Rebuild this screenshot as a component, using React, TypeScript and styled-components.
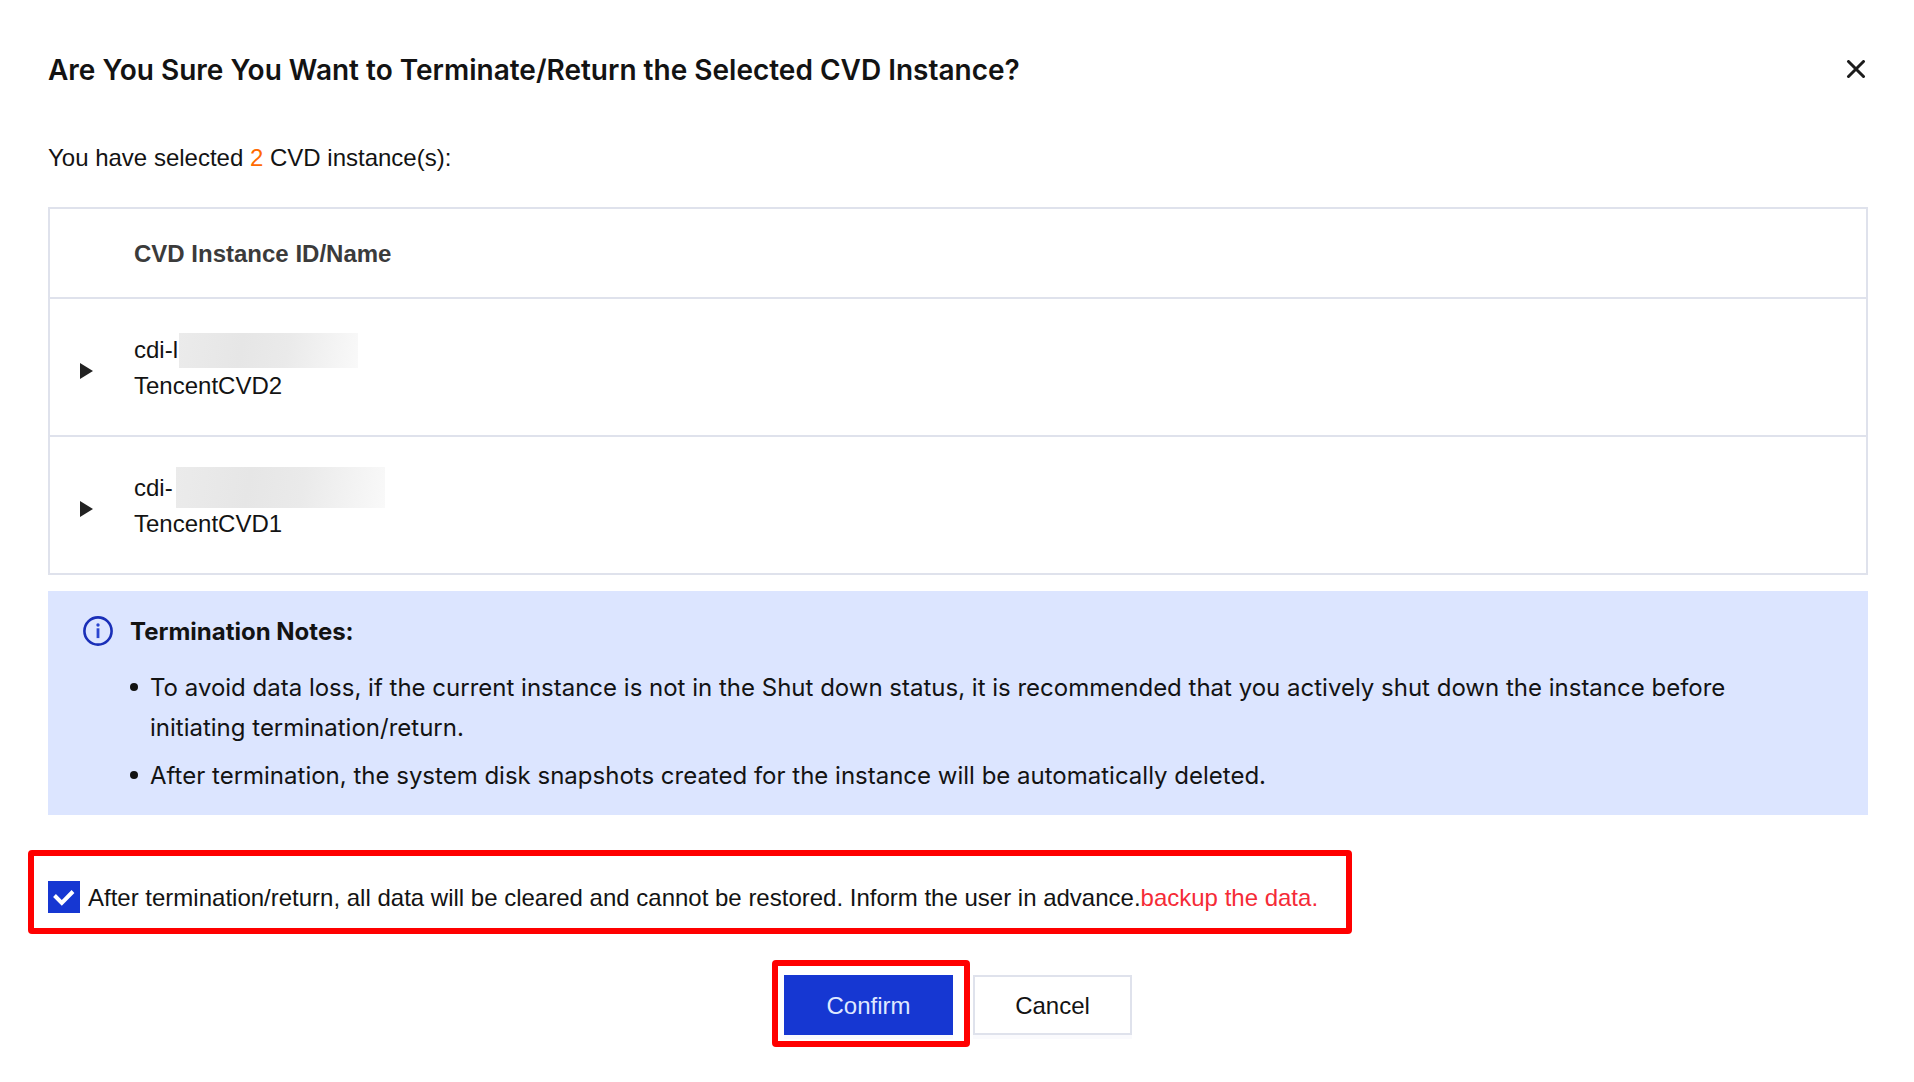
import React, { useState } from "react";
import styled, { createGlobalStyle } from "styled-components";

const sans = '"Liberation Sans", Arial, sans-serif';
const ui = 'Inter, "Liberation Sans", sans-serif';
const line = "#dfe2ec";
const blue = "#1637d2";

const GlobalStyle = createGlobalStyle`
  *, *::before, *::after { box-sizing: border-box; }
  body {
    margin: 0;
    background: #fff;
    color: #131313;
    font: 24px/36px ${sans};
  }
  button { font: inherit; color: inherit; cursor: pointer; }
`;

const Dialog = styled.main`
  padding: 52px 46px 46px 48px;
`;

const Header = styled.header`
  display: flex;
  align-items: center;
  justify-content: space-between;
  margin-bottom: 52px;
`;

const Title = styled.h1`
  margin: 0;
  font: 600 28px/36px ${ui};
`;

const CloseButton = styled.button`
  display: grid;
  place-items: center;
  width: 24px;
  height: 24px;
  padding: 0;
  border: 0;
  background: none;
`;

const Summary = styled.p`
  margin: 0 0 31px;
`;

const Count = styled.span`
  color: #ff6a00;
`;

const Table = styled.table`
  width: 100%;
  border-collapse: separate;
  border-spacing: 0;
  border: 2px solid ${line};
`;

const HeadCell = styled.th<{ $narrow?: boolean }>`
  width: ${(p) => (p.$narrow ? "84px" : "auto")};
  height: 88px;
  padding: 2px 0 0;
  color: #3b3b3b;
  text-align: left;
`;

const Cell = styled.td`
  height: 138px;
  padding: 2px 0 0;
  border-top: 2px solid ${line};
  vertical-align: middle;
`;

const ExpandButton = styled.button`
  display: grid;
  place-items: center;
  width: 24px;
  height: 24px;
  margin: 6px 0 0 24px;
  padding: 0;
  border: 0;
  background: none;
`;

const InstanceId = styled.div`
  position: relative;
`;

const Redaction = styled.span<{ $left: number; $top: number; $width: number; $height: number }>`
  position: absolute;
  left: ${(p) => p.$left}px;
  top: ${(p) => p.$top}px;
  width: ${(p) => p.$width}px;
  height: ${(p) => p.$height}px;
  background: linear-gradient(100deg, #ebebeb 0%, #e6e6e6 35%, #eaeaea 60%, #f9f9f9 100%);
`;

const Notes = styled.section`
  display: flex;
  align-items: flex-start;
  gap: 17px;
  margin-top: 16px;
  padding: 21px 128px 19px 35px;
  background: #dce5ff;
  font: 24px/40px ${ui};
`;

const InfoIcon = styled.svg`
  flex: none;
  margin-top: 4px;
`;

const NotesTitle = styled.h2`
  margin: 0 0 16px;
  font: 700 24px/40px ${ui};
`;

const NotesList = styled.ul`
  display: grid;
  gap: 8px;
  margin: 0;
  padding: 0;
  list-style: none;
`;

const Note = styled.li`
  display: grid;
  grid-template-columns: 8px 1fr;
  column-gap: 12px;

  &::before {
    content: "";
    width: 8px;
    height: 8px;
    margin-top: 15px;
    border-radius: 50%;
    background: currentColor;
  }
`;

const Highlight = styled.div<{ $inset: string }>`
  position: relative;
  width: fit-content;

  &::after {
    content: "";
    position: absolute;
    inset: ${(p) => p.$inset};
    border: 6px solid #f00;
    border-radius: 4px;
    pointer-events: none;
  }
`;

const Agreement = styled.div`
  margin-top: 66px;
`;

const AgreementLabel = styled.label`
  display: flex;
  align-items: flex-start;
  gap: 8px;
  line-height: 34px;
`;

const CheckboxBox = styled.span`
  display: grid;
  flex: none;
  width: 32px;
  height: 32px;

  & > * { grid-area: 1 / 1; }
`;

const Checkbox = styled.input`
  appearance: none;
  width: 32px;
  height: 32px;
  margin: 0;
  border: 2px solid ${line};
  background: #fff;

  &:checked {
    border-color: ${blue};
    background: ${blue};
  }
`;

const CheckMark = styled.svg`
  pointer-events: none;
`;

const Warning = styled.span`
  color: #f52b37;
`;

const Actions = styled.footer`
  display: flex;
  justify-content: center;
  gap: 20px;
  margin-top: 60px;
`;

const Button = styled.button<{ $primary?: boolean }>`
  min-width: ${(p) => (p.$primary ? "169px" : "159px")};
  height: 60px;
  padding: 2px 40px 0;
  border: 2px solid ${(p) => (p.$primary ? blue : line)};
  background: ${(p) => (p.$primary ? blue : "#fff")};
  color: ${(p) => (p.$primary ? "#dfe8ff" : "#131313")};
  box-shadow: 0 4px 0 #fafafd;
`;

const instances = [
  { id: "cdi-l", name: "TencentCVD2", mask: { $left: 45, $top: 1, $width: 179, $height: 35 } },
  { id: "cdi-", name: "TencentCVD1", mask: { $left: 42, $top: -3, $width: 209, $height: 41 } },
];

const notes = [
  "To avoid data loss, if the current instance is not in the Shut down status, it is recommended that you actively shut down the instance before initiating termination/return.",
  "After termination, the system disk snapshots created for the instance will be automatically deleted.",
];

export default function App() {
  const [agreed, setAgreed] = useState(true);

  return (
    <>
      <GlobalStyle />
      <Dialog>
        <Header>
          <Title>Are You Sure You Want to Terminate/Return the Selected CVD Instance?</Title>
          <CloseButton aria-label="Close">
            <svg width="20" height="20" viewBox="0 0 20 20" fill="none" stroke="#1c1c1c" strokeWidth="3" strokeLinecap="round">
              <path d="M2.5 1.5l15 15M17.5 1.5l-15 15" />
            </svg>
          </CloseButton>
        </Header>

        <Summary>
          You have selected <Count>2</Count> CVD instance(s):
        </Summary>

        <Table>
          <thead>
            <tr>
              <HeadCell $narrow />
              <HeadCell scope="col">CVD Instance ID/Name</HeadCell>
            </tr>
          </thead>
          <tbody>
            {instances.map((item) => (
              <tr key={item.name}>
                <Cell>
                  <ExpandButton aria-label={`Expand ${item.name}`}>
                    <svg width="13" height="16" viewBox="0 0 13 16" fill="#222">
                      <path d="M0 0l13 8-13 8z" />
                    </svg>
                  </ExpandButton>
                </Cell>
                <Cell>
                  <InstanceId>
                    {item.id}
                    <Redaction {...item.mask} />
                  </InstanceId>
                  <div>{item.name}</div>
                </Cell>
              </tr>
            ))}
          </tbody>
        </Table>

        <Notes>
          <InfoIcon width="30" height="30" viewBox="0 0 30 30" aria-hidden="true">
            <circle cx="15" cy="15" r="13.6" fill="none" stroke="#1a2fb8" strokeWidth="2.6" />
            <path d="M15 12.3v9.8" stroke="#2a45d0" strokeWidth="2.8" />
            <circle cx="15" cy="9" r="1.7" fill="#2a45d0" />
          </InfoIcon>
          <div>
            <NotesTitle>Termination Notes:</NotesTitle>
            <NotesList>
              {notes.map((text) => (
                <Note key={text}>{text}</Note>
              ))}
            </NotesList>
          </div>
        </Notes>

        <Agreement>
          <Highlight $inset="-31px -34px -19px -20px">
            <AgreementLabel>
              <CheckboxBox>
                <Checkbox type="checkbox" checked={agreed} onChange={(e) => setAgreed(e.target.checked)} />
                <CheckMark width="32" height="32" viewBox="0 0 32 32" fill="none" stroke="#fff" strokeWidth="4">
                  <path d="M6.5 14.5l7.3 7.3L25 10.5" />
                </CheckMark>
              </CheckboxBox>
              <span>
                After termination/return, all data will be cleared and cannot be restored. Inform the user in advance.
                <Warning>backup the data.</Warning>
              </span>
            </AgreementLabel>
          </Highlight>
        </Agreement>

        <Actions>
          <Highlight $inset="-15px -17px -12px -12px">
            <Button $primary>Confirm</Button>
          </Highlight>
          <Button>Cancel</Button>
        </Actions>
      </Dialog>
    </>
  );
}
